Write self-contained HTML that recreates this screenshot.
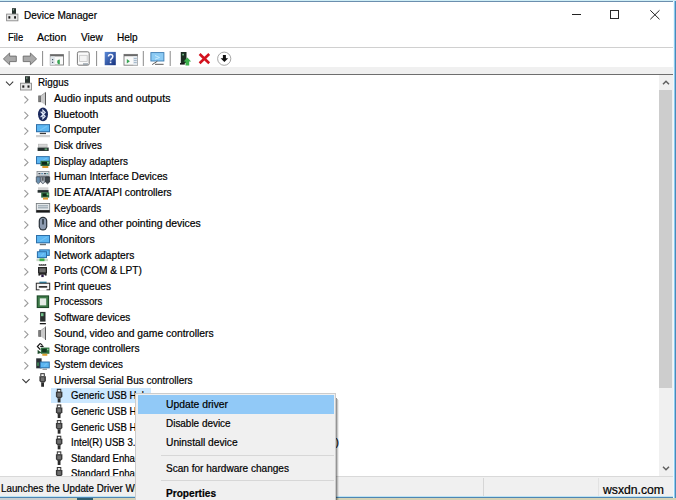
<!DOCTYPE html>
<html><head><meta charset="utf-8"><style>
html,body{margin:0;padding:0;width:676px;height:500px;overflow:hidden;background:#fff;font-family:"Liberation Sans", sans-serif;}
.t{position:absolute;white-space:nowrap;-webkit-text-stroke:0.2px currentColor;}
.sx{display:inline-block;transform-origin:0 0;}
.a{position:absolute;}
.ic{position:absolute;width:14px;height:14px;}
#win{position:absolute;left:0;top:0;width:676px;height:500px;overflow:hidden}
#tree{position:absolute;left:0;top:75px;width:659px;height:401px;overflow:hidden;background:#fff}
#treein{position:absolute;left:0;top:-75px;width:659px;height:500px}
</style></head><body><div id="win">
<!-- top border -->
<div style="position:absolute;left:0;top:0;width:676px;height:1px;background:#cfeef6"></div>
<div style="position:absolute;left:0;top:1px;width:676px;height:1px;background:#6c8fae"></div>
<!-- title -->
<svg style="position:absolute;left:0;top:0" width="30" height="24">
<rect x="12" y="8.2" width="4" height="5.8" fill="#25302c"/>
<rect x="12.8" y="9" width="1.3" height="1.6" fill="#7a9a88"/>
<rect x="6.6" y="14.1" width="11.3" height="6.7" fill="#e8e8e8" stroke="#8c8c8c" stroke-width="0.9"/>
<rect x="8.4" y="16.2" width="1.9" height="2.4" fill="#1c1c1c"/>
<rect x="14.1" y="16.2" width="1.9" height="2.4" fill="#1c1c1c"/>
</svg>
<div class="t" style="left:24.20px;top:8.12px;font-size:11.2px;line-height:14px;color:#000;font-weight:normal;"><span class="sx" style="transform:scaleX(0.8960)">Device Manager</span></div>
<!-- menu -->
<div class="t" style="left:7.80px;top:31.47px;font-size:10.2px;line-height:14px;color:#000;font-weight:normal;"><span class="sx" style="transform:scaleX(0.9195)">File</span></div>
<div class="t" style="left:37.30px;top:31.47px;font-size:10.2px;line-height:14px;color:#000;font-weight:normal;"><span class="sx" style="transform:scaleX(1.0343)">Action</span></div>
<div class="t" style="left:81.00px;top:31.47px;font-size:10.2px;line-height:14px;color:#000;font-weight:normal;"><span class="sx" style="transform:scaleX(0.9906)">View</span></div>
<div class="t" style="left:116.90px;top:31.47px;font-size:10.2px;line-height:14px;color:#000;font-weight:normal;"><span class="sx" style="transform:scaleX(0.9879)">Help</span></div>
<div style="position:absolute;left:0;top:47px;width:673px;height:1px;background:#d0d0d0"></div>
<div style="position:absolute;left:0;top:67px;width:673px;height:7px;background:#f0f0f0"></div>
<svg style="position:absolute;left:0;top:48px" width="240" height="19" viewBox="0 48 240 19">
<path d="M3.4 58.9 L9.6 53 L9.6 56.1 L16.3 56.1 L16.3 61.6 L9.6 61.6 L9.6 64.8 Z" fill="#a9a9a9" stroke="#6c6c6c" stroke-width="0.9" stroke-linejoin="round"/>
<path d="M36.6 58.9 L30.4 53 L30.4 56.1 L23.2 56.1 L23.2 61.6 L30.4 61.6 L30.4 64.8 Z" fill="#a9a9a9" stroke="#6c6c6c" stroke-width="0.9" stroke-linejoin="round"/>
<rect x="42.1" y="51" width="1" height="15" fill="#8a8a8a"/>
<rect x="50.3" y="54.6" width="13.2" height="10.4" fill="#fafafa" stroke="#7c7c7c" stroke-width="0.9"/>
<rect x="50.3" y="54.6" width="13.2" height="1.8" fill="#6a6a6a"/>
<rect x="50.3" y="56.4" width="4.5" height="8.6" fill="#dfe6ea"/>
<rect x="52" y="59" width="1.2" height="1.2" fill="#4a5a6a"/><rect x="52" y="61.8" width="1.2" height="1.2" fill="#4a5a6a"/>
<path d="M59.8 59.6 A2.6 2.3 0 0 0 59.8 64.2 Z" fill="#3aa655"/>
<rect x="68.6" y="51" width="1" height="15" fill="#8a8a8a"/>
<rect x="77.4" y="51.8" width="11.8" height="13.4" rx="1.5" fill="#fbfbfb" stroke="#787878" stroke-width="1"/>
<rect x="79.6" y="55.3" width="7.6" height="6.2" fill="#f4f4f4" stroke="#c4c4c4" stroke-width="0.8"/>
<rect x="83" y="63.5" width="5" height="1" fill="#6a7a88"/>
<rect x="96.1" y="51" width="1" height="15" fill="#8a8a8a"/>
<defs><linearGradient id="hg" x1="0" y1="0" x2="1" y2="1"><stop offset="0" stop-color="#5a8ad8"/><stop offset="1" stop-color="#16307c"/></linearGradient></defs>
<rect x="104.7" y="51.9" width="11.1" height="13.3" fill="url(#hg)"/>
<path d="M108.5 56.6 Q108.5 54.6 110.6 54.6 Q112.8 54.6 112.8 56.6 Q112.8 58 111.3 58.8 Q110.6 59.3 110.6 60.6" fill="none" stroke="#f4f6ff" stroke-width="1.5"/>
<rect x="109.8" y="61.6" width="1.6" height="1.6" fill="#f4f6ff"/>
<rect x="124" y="54.4" width="13.4" height="10.8" fill="#fafafa" stroke="#7c7c7c" stroke-width="0.9"/>
<rect x="124" y="54.4" width="13.4" height="1.8" fill="#6a6a6a"/>
<path d="M126.8 59 L129.9 61.2 L126.8 63.4 Z" fill="#3aa655"/>
<rect x="133.2" y="56.2" width="4.2" height="9" fill="#e2e8ee"/>
<rect x="133.8" y="58" width="3" height="0.8" fill="#9ab0c4"/><rect x="133.8" y="60" width="3" height="0.8" fill="#9ab0c4"/><rect x="133.8" y="62" width="3" height="0.8" fill="#9ab0c4"/>
<rect x="142.8" y="51" width="1" height="15" fill="#8a8a8a"/>
<rect x="150.9" y="52.6" width="13" height="8.4" fill="#8ccbf4" stroke="#3c7cb2" stroke-width="0.9"/>
<path d="M155 55.5 L159.5 57.5 L155 59.2" fill="none" stroke="#c8ecff" stroke-width="1"/>
<path d="M157.4 61.2 L152.2 64.6 M155 64.3 L163.6 64.3" fill="none" stroke="#5a5a5a" stroke-width="1"/>
<rect x="169.7" y="51" width="1" height="15" fill="#8a8a8a"/>
<rect x="180.8" y="52" width="5.7" height="11" fill="#1c2e22"/>
<rect x="182.3" y="53.8" width="1.6" height="1.6" fill="#7ac890"/>
<rect x="180" y="63" width="4.8" height="1.6" fill="#1a1a1a"/>
<path d="M183.6 61.5 L187.35 57.6 L191.1 61.5 L189.2 61.5 L189.2 65.4 L185.5 65.4 L185.5 61.5 Z" fill="#3db24d"/>
<path d="M199.6 54 L209.2 63.2 M209.2 54 L199.6 63.2" stroke="#d3121e" stroke-width="2.6"/>
<circle cx="224.2" cy="58.7" r="6.6" fill="#ffffff" stroke="#9c9c9c" stroke-width="0.9"/>
<path d="M222.9 55.1 L225.9 55.1 L225.9 58.2 L228.2 58.2 L224.4 62 L220.6 58.2 L222.9 58.2 Z" fill="#111"/>
</svg>
<div style="position:absolute;left:0;top:74px;width:673px;height:1px;background:#6e6e6e"></div>
<!-- title buttons -->
<div style="position:absolute;left:571.5px;top:14px;width:9px;height:1px;background:#222"></div>
<div style="position:absolute;left:610px;top:10px;width:7px;height:7px;border:1px solid #2a2a2a"></div>
<svg style="position:absolute;left:649px;top:9px" width="12" height="12"><path d="M1.3 1.3 L10.5 10.3 M10.5 1.3 L1.3 10.3" stroke="#222" stroke-width="1"/></svg>
<div id="tree"><div id="treein">
<div style="position:absolute;left:51px;top:388px;width:100px;height:15px;background:#cce8ff"></div><div class="t" style="left:38.20px;top:76.47px;font-size:10.2px;line-height:14px;color:#000;font-weight:normal;"><span class="sx" style="transform:scaleX(0.9647)">Riggus</span></div>
<div class="t" style="left:54.00px;top:92.11px;font-size:10.2px;line-height:14px;color:#000;font-weight:normal;"><span class="sx" style="transform:scaleX(1.0387)">Audio inputs and outputs</span></div>
<div class="t" style="left:54.00px;top:107.75px;font-size:10.2px;line-height:14px;color:#000;font-weight:normal;"><span class="sx" style="transform:scaleX(1.0287)">Bluetooth</span></div>
<div class="t" style="left:54.00px;top:123.39px;font-size:10.2px;line-height:14px;color:#000;font-weight:normal;"><span class="sx" style="transform:scaleX(1.0328)">Computer</span></div>
<div class="t" style="left:54.00px;top:139.03px;font-size:10.2px;line-height:14px;color:#000;font-weight:normal;"><span class="sx" style="transform:scaleX(0.9593)">Disk drives</span></div>
<div class="t" style="left:54.00px;top:154.67px;font-size:10.2px;line-height:14px;color:#000;font-weight:normal;"><span class="sx" style="transform:scaleX(0.9738)">Display adapters</span></div>
<div class="t" style="left:54.00px;top:170.31px;font-size:10.2px;line-height:14px;color:#000;font-weight:normal;"><span class="sx" style="transform:scaleX(0.9931)">Human Interface Devices</span></div>
<div class="t" style="left:54.00px;top:185.95px;font-size:10.2px;line-height:14px;color:#000;font-weight:normal;"><span class="sx" style="transform:scaleX(0.9963)">IDE ATA/ATAPI controllers</span></div>
<div class="t" style="left:54.00px;top:201.59px;font-size:10.2px;line-height:14px;color:#000;font-weight:normal;"><span class="sx" style="transform:scaleX(0.9688)">Keyboards</span></div>
<div class="t" style="left:54.00px;top:217.23px;font-size:10.2px;line-height:14px;color:#000;font-weight:normal;"><span class="sx" style="transform:scaleX(1.0246)">Mice and other pointing devices</span></div>
<div class="t" style="left:54.00px;top:232.87px;font-size:10.2px;line-height:14px;color:#000;font-weight:normal;"><span class="sx" style="transform:scaleX(1.0415)">Monitors</span></div>
<div class="t" style="left:54.00px;top:248.51px;font-size:10.2px;line-height:14px;color:#000;font-weight:normal;"><span class="sx" style="transform:scaleX(1.0057)">Network adapters</span></div>
<div class="t" style="left:54.00px;top:264.15px;font-size:10.2px;line-height:14px;color:#000;font-weight:normal;"><span class="sx" style="transform:scaleX(0.9942)">Ports (COM &amp; LPT)</span></div>
<div class="t" style="left:54.00px;top:279.79px;font-size:10.2px;line-height:14px;color:#000;font-weight:normal;"><span class="sx" style="transform:scaleX(0.9964)">Print queues</span></div>
<div class="t" style="left:54.00px;top:295.43px;font-size:10.2px;line-height:14px;color:#000;font-weight:normal;"><span class="sx" style="transform:scaleX(0.9499)">Processors</span></div>
<div class="t" style="left:54.00px;top:311.07px;font-size:10.2px;line-height:14px;color:#000;font-weight:normal;"><span class="sx" style="transform:scaleX(0.9822)">Software devices</span></div>
<div class="t" style="left:54.00px;top:326.71px;font-size:10.2px;line-height:14px;color:#000;font-weight:normal;"><span class="sx" style="transform:scaleX(1.0143)">Sound, video and game controllers</span></div>
<div class="t" style="left:54.00px;top:342.35px;font-size:10.2px;line-height:14px;color:#000;font-weight:normal;"><span class="sx" style="transform:scaleX(0.9998)">Storage controllers</span></div>
<div class="t" style="left:54.00px;top:357.99px;font-size:10.2px;line-height:14px;color:#000;font-weight:normal;"><span class="sx" style="transform:scaleX(0.9671)">System devices</span></div>
<div class="t" style="left:54.00px;top:373.63px;font-size:10.2px;line-height:14px;color:#000;font-weight:normal;"><span class="sx" style="transform:scaleX(0.9785)">Universal Serial Bus controllers</span></div>
<div class="t" style="left:71.20px;top:389.27px;font-size:10.2px;line-height:14px;color:#000;font-weight:normal;"><span class="sx" style="transform:scaleX(0.9400)">Generic USB Hub</span></div>
<div class="t" style="left:71.20px;top:404.91px;font-size:10.2px;line-height:14px;color:#000;font-weight:normal;"><span class="sx" style="transform:scaleX(0.9400)">Generic USB Hub</span></div>
<div class="t" style="left:71.20px;top:420.55px;font-size:10.2px;line-height:14px;color:#000;font-weight:normal;"><span class="sx" style="transform:scaleX(0.9400)">Generic USB Hub</span></div>
<div class="t" style="left:71.20px;top:436.19px;font-size:10.2px;line-height:14px;color:#000;font-weight:normal;"><span class="sx" style="transform:scaleX(0.9400)">Intel(R) USB 3.0 eXtensible</span></div>
<div class="t" style="left:335.40px;top:436.19px;font-size:10.2px;line-height:14px;color:#000;font-weight:normal;">)</div>
<div class="t" style="left:71.20px;top:451.83px;font-size:10.2px;line-height:14px;color:#000;font-weight:normal;"><span class="sx" style="transform:scaleX(0.9400)">Standard Enhanced PCI to USB Host Controller</span></div>
<div class="t" style="left:71.20px;top:467.47px;font-size:10.2px;line-height:14px;color:#000;font-weight:normal;"><span class="sx" style="transform:scaleX(0.9400)">Standard Enhanced PCI to USB Host Controller</span></div>
<svg style="position:absolute;left:0;top:0" width="659" height="500"><path d="M6 81.70 L9.6 85.30 L13.2 81.70" fill="none" stroke="#3a3a3a" stroke-width="1.1"/>
<g transform="translate(0,82.40)"><rect x="25" y="-6.2" width="5" height="6.8" fill="#2b3431"/>
<rect x="26" y="-5.2" width="1.5" height="2" fill="#6f8a7a"/>
<rect x="20.5" y="0.8" width="11" height="6.8" fill="#e6e6e6" stroke="#8a8a8a" stroke-width="0.9"/>
<rect x="22.3" y="3" width="2" height="2.3" fill="#1e1e1e"/>
<rect x="27.5" y="3" width="2" height="2.3" fill="#1e1e1e"/></g>
<path d="M24.4 96.24 L28 99.84 L24.4 103.44" fill="none" stroke="#9a9a9a" stroke-width="1.1"/>
<g transform="translate(0,98.04)"><g transform="translate(0.0,0.0)">
<rect x="38.3" y="-2.5" width="3" height="6.6" fill="#5a5a5a"/>
<rect x="39.3" y="-2" width="1.2" height="5.6" fill="#8a8a8a"/>
<path d="M41.2 -2.5 L45.9 -5.9 L45.9 7.3 L41.2 4.1 Z" fill="#c9c9c9"/>
<rect x="45" y="-5.9" width="1" height="13.2" fill="#575757"/>
<path d="M41.2 -2.5 L45.9 -5.9" stroke="#9a9a9a" stroke-width="0.8"/>
</g></g>
<path d="M24.4 111.88 L28 115.48 L24.4 119.08" fill="none" stroke="#9a9a9a" stroke-width="1.1"/>
<g transform="translate(0,113.68)"><ellipse cx="43" cy="0.65" rx="5" ry="6.8" fill="#1b2a5e"/>
<path d="M40.6 -2.1 L45.2 2.6 L42.9 4.9 L42.9 -3.6 L45.2 -1.3 L40.6 3.4" fill="none" stroke="#e6eefc" stroke-width="1.1"/></g>
<path d="M24.4 127.52 L28 131.12 L24.4 134.72" fill="none" stroke="#9a9a9a" stroke-width="1.1"/>
<g transform="translate(0,129.32)"><rect x="36" y="-5.2" width="14" height="8.1" fill="#2d6fa8"/>
<rect x="37" y="-4.2" width="12" height="6.1" fill="#5cb6f2"/>
<path d="M40 0.8999999999999995 L47 -3.2" stroke="#86cdf8" stroke-width="1.2" opacity="0.6"/><rect x="39.8" y="3.5" width="6.2" height="1.3" fill="#3a3a3a"/>
<rect x="36" y="5.7" width="14" height="2.2" fill="#cfcfcf"/></g>
<path d="M24.4 143.16 L28 146.76 L24.4 150.36" fill="none" stroke="#9a9a9a" stroke-width="1.1"/>
<g transform="translate(0,144.96)"><rect x="38.3" y="-0.8" width="8.8" height="2.9" fill="#d6d6d6" stroke="#b0b0b0" stroke-width="0.6"/>
<rect x="37.6" y="2.6" width="11.1" height="3.4" fill="#263030"/>
<rect x="44.6" y="3.4" width="2.6" height="1.8" fill="#5a9a6a"/></g>
<path d="M24.4 158.80 L28 162.40 L24.4 166.00" fill="none" stroke="#9a9a9a" stroke-width="1.1"/>
<g transform="translate(0,160.60)"><rect x="36" y="-4.5" width="13.8" height="8.1" fill="#2d6fa8"/>
<rect x="37" y="-3.5" width="11.8" height="6.1" fill="#5cb6f2"/>
<path d="M40 1.5999999999999996 L46.8 -2.5" stroke="#86cdf8" stroke-width="1.2" opacity="0.6"/><rect x="40.5" y="0.2" width="9" height="5.2" fill="#2b6a3e"/>
<rect x="42.0" y="1.4" width="5" height="2.7" fill="#0f2a18"/>
<rect x="47.0" y="1.2" width="1.8" height="1.6" fill="#7ac88a"/><rect x="42.3" y="5.4" width="6" height="2" fill="#d99a2e"/></g>
<path d="M24.4 174.44 L28 178.04 L24.4 181.64" fill="none" stroke="#9a9a9a" stroke-width="1.1"/>
<g transform="translate(0,176.24)"><rect x="37" y="-4.7" width="12" height="5" fill="#dfe3e6" stroke="#80868c" stroke-width="0.8"/>
<rect x="38.4" y="-3.2" width="2" height="1.2" fill="#3a4550"/><rect x="41.2" y="-3.2" width="2" height="1.2" fill="#5a8ab0"/><rect x="44" y="-3.2" width="2" height="1.2" fill="#3a4550"/><rect x="46.4" y="-3.2" width="1.6" height="1.2" fill="#5aa0a0"/>
<rect x="38.4" y="-1.4" width="9.4" height="0.9" fill="#9aa4ac"/>
<path d="M36.3 0.6 L40.3 0.6 L40.3 5.8 L38.3 7.6 L36.3 5.8 Z" fill="#6a90b0" stroke="#3a4450" stroke-width="0.7"/>
<path d="M40.9 0.6 L44.9 0.6 L44.9 5.8 L42.9 7.6 L40.9 5.8 Z" fill="#b4bcc4" stroke="#3a4450" stroke-width="0.7"/>
<rect x="42.4" y="1" width="1" height="3.5" fill="#222"/>
<path d="M45.5 0.6 L49.6 0.6 L49.6 5.8 L47.5 7.6 L45.5 5.8 Z" fill="#3e464c" stroke="#22282c" stroke-width="0.7"/></g>
<path d="M24.4 190.08 L28 193.68 L24.4 197.28" fill="none" stroke="#9a9a9a" stroke-width="1.1"/>
<g transform="translate(0,191.88)"><rect x="38" y="-4.6" width="10.4" height="2.8" fill="#d4d4d4"/>
<rect x="37.6" y="-1.8" width="11" height="2.6" fill="#263030"/><rect x="41.2" y="0.5" width="8" height="5.2" fill="#2b6a3e"/>
<rect x="42.7" y="1.7" width="4" height="2.7" fill="#0f2a18"/>
<rect x="46.7" y="1.5" width="1.8" height="1.6" fill="#7ac88a"/><rect x="43.0" y="5.7" width="5" height="2" fill="#d99a2e"/></g>
<path d="M24.4 205.72 L28 209.32 L24.4 212.92" fill="none" stroke="#9a9a9a" stroke-width="1.1"/>
<g transform="translate(0,207.52)"><rect x="36.3" y="-4" width="13.4" height="8.8" fill="#e4e8ea" stroke="#6e7478" stroke-width="0.8"/>
<rect x="38" y="-2.2" width="10" height="1" fill="#8a9aa6"/>
<rect x="38" y="-0.2" width="10" height="1" fill="#8a9aa6"/>
<rect x="36.3" y="2.6" width="13.4" height="2.2" fill="#1a1a1a"/></g>
<path d="M24.4 221.36 L28 224.96 L24.4 228.56" fill="none" stroke="#9a9a9a" stroke-width="1.1"/>
<g transform="translate(0,223.16)"><rect x="38.7" y="-6.4" width="8.6" height="13.7" rx="4.2" fill="#2c343c"/>
<rect x="39.9" y="-5.2" width="6.2" height="11.3" rx="3.1" fill="#8d9bb0"/>
<rect x="42.2" y="-4.2" width="1.6" height="5.5" fill="#2c3a44"/></g>
<path d="M24.4 237.00 L28 240.60 L24.4 244.20" fill="none" stroke="#9a9a9a" stroke-width="1.1"/>
<g transform="translate(0,238.80)"><rect x="36" y="-3.8" width="14" height="8.3" fill="#2d6fa8"/>
<rect x="37" y="-2.8" width="12" height="6.300000000000001" fill="#5cb6f2"/>
<path d="M40 2.500000000000001 L47 -1.7999999999999998" stroke="#86cdf8" stroke-width="1.2" opacity="0.6"/><rect x="39.8" y="5" width="6.2" height="1.4" fill="#4a4a4a" opacity="0.8"/></g>
<path d="M24.4 252.64 L28 256.24 L24.4 259.84" fill="none" stroke="#9a9a9a" stroke-width="1.1"/>
<g transform="translate(0,254.44)"><rect x="39.2" y="-5.1" width="10.6" height="6.6" fill="#2d6fa8"/>
<rect x="40.2" y="-4.1" width="8.6" height="4.6" fill="#5cb6f2"/>
<path d="M43.2 -0.5 L46.800000000000004 -3.0999999999999996" stroke="#86cdf8" stroke-width="1.2" opacity="0.6"/><rect x="36.9" y="-3.2" width="10.1" height="6.9" fill="#2d6fa8"/>
<rect x="37.9" y="-2.2" width="8.1" height="4.9" fill="#5cb6f2"/>
<path d="M40.9 1.7000000000000002 L44.0 -1.2000000000000002" stroke="#86cdf8" stroke-width="1.2" opacity="0.6"/><rect x="36.5" y="4.3" width="11.5" height="2.4" fill="#c8d8c8"/>
<rect x="39.5" y="4" width="5" height="2.7" fill="#3fae4a"/></g>
<path d="M24.4 268.28 L28 271.88 L24.4 275.48" fill="none" stroke="#9a9a9a" stroke-width="1.1"/>
<g transform="translate(0,270.08)"><rect x="38.8" y="-6" width="7.4" height="1.6" fill="#3a3a3a"/>
<rect x="39.8" y="-6" width="0.8" height="0.8" fill="#ddd"/><rect x="41.8" y="-6" width="0.8" height="0.8" fill="#ddd"/><rect x="43.8" y="-6" width="0.8" height="0.8" fill="#ddd"/>
<path d="M38 -3 L47 -3 L47 3 L45.5 4.6 L39.5 4.6 L38 3 Z" fill="#262626"/>
<rect x="39.3" y="-1.8" width="6.4" height="4" fill="#6e6e6e"/>
<rect x="38.4" y="3.5" width="1.8" height="2" fill="#1e1e1e"/><rect x="44.8" y="3.5" width="1.8" height="2" fill="#1e1e1e"/>
<rect x="41.3" y="4.6" width="2.4" height="2.4" fill="#2a1a44"/></g>
<path d="M24.4 283.92 L28 287.52 L24.4 291.12" fill="none" stroke="#9a9a9a" stroke-width="1.1"/>
<g transform="translate(0,285.72)"><rect x="39.4" y="-4.1" width="7.2" height="2.5" fill="#2e8ab0"/>
<rect x="36.3" y="-2.5" width="13.4" height="6.6" fill="#f4f4f4" stroke="#2a2a2a" stroke-width="1"/>
<rect x="38.8" y="0.4" width="8.4" height="1.5" fill="#1a1a1a"/>
<rect x="39.5" y="2.6" width="7" height="2.4" fill="#ffffff"/></g>
<path d="M24.4 299.56 L28 303.16 L24.4 306.76" fill="none" stroke="#9a9a9a" stroke-width="1.1"/>
<g transform="translate(0,301.36)"><rect x="36.7" y="-6" width="12.4" height="12.7" fill="#1d4a28"/>
<rect x="37.8" y="-4.9" width="10.2" height="10.5" fill="#3d7a48"/>
<rect x="39.8" y="-3" width="6.4" height="7" fill="#e4ece6"/></g>
<path d="M24.4 315.20 L28 318.80 L24.4 322.40" fill="none" stroke="#9a9a9a" stroke-width="1.1"/>
<g transform="translate(0,317.00)"><rect x="40.1" y="-5.1" width="5.4" height="9.7" fill="#29302e"/>
<rect x="41" y="-3.8" width="2.5" height="3" fill="#6fbf88"/>
<rect x="39.8" y="6" width="6.1" height="1.3" fill="#1a1a1a"/></g>
<path d="M24.4 330.84 L28 334.44 L24.4 338.04" fill="none" stroke="#9a9a9a" stroke-width="1.1"/>
<g transform="translate(0,332.64)"><g transform="translate(0.0,0.0)">
<rect x="38.3" y="-2.5" width="3" height="6.6" fill="#5a5a5a"/>
<rect x="39.3" y="-2" width="1.2" height="5.6" fill="#8a8a8a"/>
<path d="M41.2 -2.5 L45.9 -5.9 L45.9 7.3 L41.2 4.1 Z" fill="#c9c9c9"/>
<rect x="45" y="-5.9" width="1" height="13.2" fill="#575757"/>
<path d="M41.2 -2.5 L45.9 -5.9" stroke="#9a9a9a" stroke-width="0.8"/>
</g></g>
<path d="M24.4 346.48 L28 350.08 L24.4 353.68" fill="none" stroke="#9a9a9a" stroke-width="1.1"/>
<g transform="translate(0,348.28)"><path d="M40.3 -5 L37.4 -1.8 L40.3 1.3" fill="none" stroke="#151515" stroke-width="1.2"/>
<path d="M40.3 -5 L42.6 -2.6" fill="none" stroke="#151515" stroke-width="1.1"/>
<rect x="40.2" y="-2.4" width="3.4" height="1.1" fill="#151515"/>
<path d="M37.6 1.4 L41.5 4.5 L37.6 5.6 Z" fill="#1d4a2a"/>
<rect x="40.8" y="-0.7" width="8.6" height="6.2" fill="#2f7040"/>
<rect x="42.2" y="0.6" width="4.4" height="3.4" fill="#123520"/>
<rect x="47" y="0.4" width="1.6" height="1.5" fill="#8ad09a"/>
<rect x="42.3" y="5.5" width="5" height="2" fill="#dca030"/></g>
<path d="M24.4 362.12 L28 365.72 L24.4 369.32" fill="none" stroke="#9a9a9a" stroke-width="1.1"/>
<g transform="translate(0,363.92)"><rect x="36.2" y="-5.6" width="5.4" height="10" fill="#2a2f34"/>
<rect x="37" y="-1.5" width="2" height="3.5" fill="#3a7a50"/><rect x="39.8" y="-2.4" width="10" height="6.8" fill="#2d6fa8"/>
<rect x="40.8" y="-1.4" width="8" height="4.8" fill="#5cb6f2"/>
<path d="M43.8 2.4000000000000004 L46.8 -0.3999999999999999" stroke="#86cdf8" stroke-width="1.2" opacity="0.6"/><rect x="42.5" y="4.8" width="4.5" height="1.2" fill="#555" opacity="0.6"/></g>
<path d="M22.4 379.06 L26 382.66 L29.6 379.06" fill="none" stroke="#3a3a3a" stroke-width="1.1"/>
<g transform="translate(0,379.56)"><g transform="translate(0.0,0)">
<rect x="40.3" y="-6.4" width="4.5" height="3.3" fill="#333"/>
<rect x="41.3" y="-5.3" width="2.5" height="1.7" fill="#fff"/>
<path d="M39.4 -3.4 L45.9 -3.4 L45.9 1.5 L44 3.3 L41.3 3.3 L39.4 1.5 Z" fill="#3a3a3a"/>
<rect x="40.8" y="-2.3" width="3.6" height="3.8" fill="#707070"/>
<rect x="41.2" y="3.2" width="2.8" height="4" fill="#2a2a2a"/>
</g></g>
<g transform="translate(0,395.20)"><g transform="translate(16.5,0)">
<rect x="40.3" y="-6.4" width="4.5" height="3.3" fill="#333"/>
<rect x="41.3" y="-5.3" width="2.5" height="1.7" fill="#fff"/>
<path d="M39.4 -3.4 L45.9 -3.4 L45.9 1.5 L44 3.3 L41.3 3.3 L39.4 1.5 Z" fill="#3a3a3a"/>
<rect x="40.8" y="-2.3" width="3.6" height="3.8" fill="#707070"/>
<rect x="41.2" y="3.2" width="2.8" height="4" fill="#2a2a2a"/>
</g></g>
<g transform="translate(0,410.84)"><g transform="translate(16.5,0)">
<rect x="40.3" y="-6.4" width="4.5" height="3.3" fill="#333"/>
<rect x="41.3" y="-5.3" width="2.5" height="1.7" fill="#fff"/>
<path d="M39.4 -3.4 L45.9 -3.4 L45.9 1.5 L44 3.3 L41.3 3.3 L39.4 1.5 Z" fill="#3a3a3a"/>
<rect x="40.8" y="-2.3" width="3.6" height="3.8" fill="#707070"/>
<rect x="41.2" y="3.2" width="2.8" height="4" fill="#2a2a2a"/>
</g></g>
<g transform="translate(0,426.48)"><g transform="translate(16.5,0)">
<rect x="40.3" y="-6.4" width="4.5" height="3.3" fill="#333"/>
<rect x="41.3" y="-5.3" width="2.5" height="1.7" fill="#fff"/>
<path d="M39.4 -3.4 L45.9 -3.4 L45.9 1.5 L44 3.3 L41.3 3.3 L39.4 1.5 Z" fill="#3a3a3a"/>
<rect x="40.8" y="-2.3" width="3.6" height="3.8" fill="#707070"/>
<rect x="41.2" y="3.2" width="2.8" height="4" fill="#2a2a2a"/>
</g></g>
<g transform="translate(0,442.12)"><g transform="translate(16.5,0)">
<rect x="40.3" y="-6.4" width="4.5" height="3.3" fill="#333"/>
<rect x="41.3" y="-5.3" width="2.5" height="1.7" fill="#fff"/>
<path d="M39.4 -3.4 L45.9 -3.4 L45.9 1.5 L44 3.3 L41.3 3.3 L39.4 1.5 Z" fill="#3a3a3a"/>
<rect x="40.8" y="-2.3" width="3.6" height="3.8" fill="#707070"/>
<rect x="41.2" y="3.2" width="2.8" height="4" fill="#2a2a2a"/>
</g></g>
<g transform="translate(0,457.76)"><g transform="translate(16.5,0)">
<rect x="40.3" y="-6.4" width="4.5" height="3.3" fill="#333"/>
<rect x="41.3" y="-5.3" width="2.5" height="1.7" fill="#fff"/>
<path d="M39.4 -3.4 L45.9 -3.4 L45.9 1.5 L44 3.3 L41.3 3.3 L39.4 1.5 Z" fill="#3a3a3a"/>
<rect x="40.8" y="-2.3" width="3.6" height="3.8" fill="#707070"/>
<rect x="41.2" y="3.2" width="2.8" height="4" fill="#2a2a2a"/>
</g></g>
<g transform="translate(0,473.40)"><g transform="translate(16.5,0)">
<rect x="40.3" y="-6.4" width="4.5" height="3.3" fill="#333"/>
<rect x="41.3" y="-5.3" width="2.5" height="1.7" fill="#fff"/>
<path d="M39.4 -3.4 L45.9 -3.4 L45.9 1.5 L44 3.3 L41.3 3.3 L39.4 1.5 Z" fill="#3a3a3a"/>
<rect x="40.8" y="-2.3" width="3.6" height="3.8" fill="#707070"/>
<rect x="41.2" y="3.2" width="2.8" height="4" fill="#2a2a2a"/>
</g></g></svg>
</div></div>
<!-- scrollbar -->
<div style="position:absolute;left:659px;top:75px;width:14px;height:401px;background:#f0f0f0"></div>
<div style="position:absolute;left:659px;top:90px;width:13px;height:298px;background:#cdcdcd"></div>
<svg style="position:absolute;left:661px;top:78px" width="10" height="10"><path d="M2 6.3 L5 3.3 L8 6.3" fill="none" stroke="#606060" stroke-width="1.5"/></svg>
<svg style="position:absolute;left:661px;top:463px" width="10" height="10"><path d="M2 3.7 L5 6.7 L8 3.7" fill="none" stroke="#606060" stroke-width="1.5"/></svg>
<!-- status bar -->
<div style="position:absolute;left:0;top:476px;width:673px;height:1px;background:#d9d9d9"></div>
<div style="position:absolute;left:0;top:477px;width:673px;height:19px;background:#f0f0f0"></div>
<div style="position:absolute;left:483px;top:478px;width:1px;height:18px;background:#d6d6d6"></div>
<div style="position:absolute;left:598px;top:478px;width:1px;height:18px;background:#e2e2e2"></div>
<div class="t" style="left:0.60px;top:482.47px;font-size:10.2px;line-height:14px;color:#000;font-weight:normal;"><span class="sx" style="transform:scaleX(0.9599)">Launches the Update Driver Wizard for the selected device.</span></div>
<div class="t" style="left:603.40px;top:482.77px;font-size:12.2px;line-height:14px;color:#000;font-weight:normal;"><span class="sx" style="transform:scaleX(1.0005)">wsxdn.com</span></div>
<div style="position:absolute;left:0;top:496px;width:676px;height:1px;background:#bde3f3"></div>
<div style="position:absolute;left:0;top:497px;width:676px;height:1px;background:#4f86b3"></div>
<div style="position:absolute;left:0;top:498px;width:676px;height:2px;background:#d6d2b4"></div>
<div style="position:absolute;left:0;top:498px;width:68px;height:2px;background:#c9ced0"></div>
<div style="position:absolute;left:77px;top:498px;width:16px;height:2px;background:#2f5f6e"></div>
<!-- right border -->
<div style="position:absolute;left:673px;top:1px;width:1px;height:497px;background:#eef8fe"></div>
<div style="position:absolute;left:674px;top:1px;width:1px;height:497px;background:#8ccaee"></div>
<div style="position:absolute;left:675px;top:1px;width:1px;height:497px;background:#4a8ab8"></div>
<!-- context menu -->
<div style="position:absolute;left:336px;top:398px;width:1px;height:102px;background:rgba(0,0,0,0.42)"></div>
<div style="position:absolute;left:337px;top:399px;width:1px;height:101px;background:rgba(0,0,0,0.22)"></div>
<div style="position:absolute;left:338px;top:400px;width:1px;height:100px;background:rgba(0,0,0,0.07)"></div>
<div style="position:absolute;left:135px;top:393px;width:199px;height:110px;background:#f0f0f0;border:1px solid #cccccc"></div>
<div style="position:absolute;left:138px;top:395px;width:196px;height:19px;background:#91c9f7"></div>
<div class="t" style="left:165.80px;top:398.47px;font-size:10.2px;line-height:14px;color:#000;font-weight:normal;"><span class="sx" style="transform:scaleX(1.0138)">Update driver</span></div>
<div class="t" style="left:165.80px;top:417.47px;font-size:10.2px;line-height:14px;color:#000;font-weight:normal;"><span class="sx" style="transform:scaleX(0.9749)">Disable device</span></div>
<div class="t" style="left:165.80px;top:436.47px;font-size:10.2px;line-height:14px;color:#000;font-weight:normal;"><span class="sx" style="transform:scaleX(1.0034)">Uninstall device</span></div>
<div style="position:absolute;left:161px;top:455px;width:173px;height:1px;background:#d7d7d7"></div>
<div class="t" style="left:165.80px;top:462.47px;font-size:10.2px;line-height:14px;color:#000;font-weight:normal;"><span class="sx" style="transform:scaleX(0.9872)">Scan for hardware changes</span></div>
<div style="position:absolute;left:161px;top:480px;width:173px;height:1px;background:#d7d7d7"></div>
<div class="t" style="left:165.80px;top:486.97px;font-size:10.2px;line-height:14px;color:#000;font-weight:bold;"><span class="sx" style="transform:scaleX(0.9922)">Properties</span></div>
</div>
</body></html>
